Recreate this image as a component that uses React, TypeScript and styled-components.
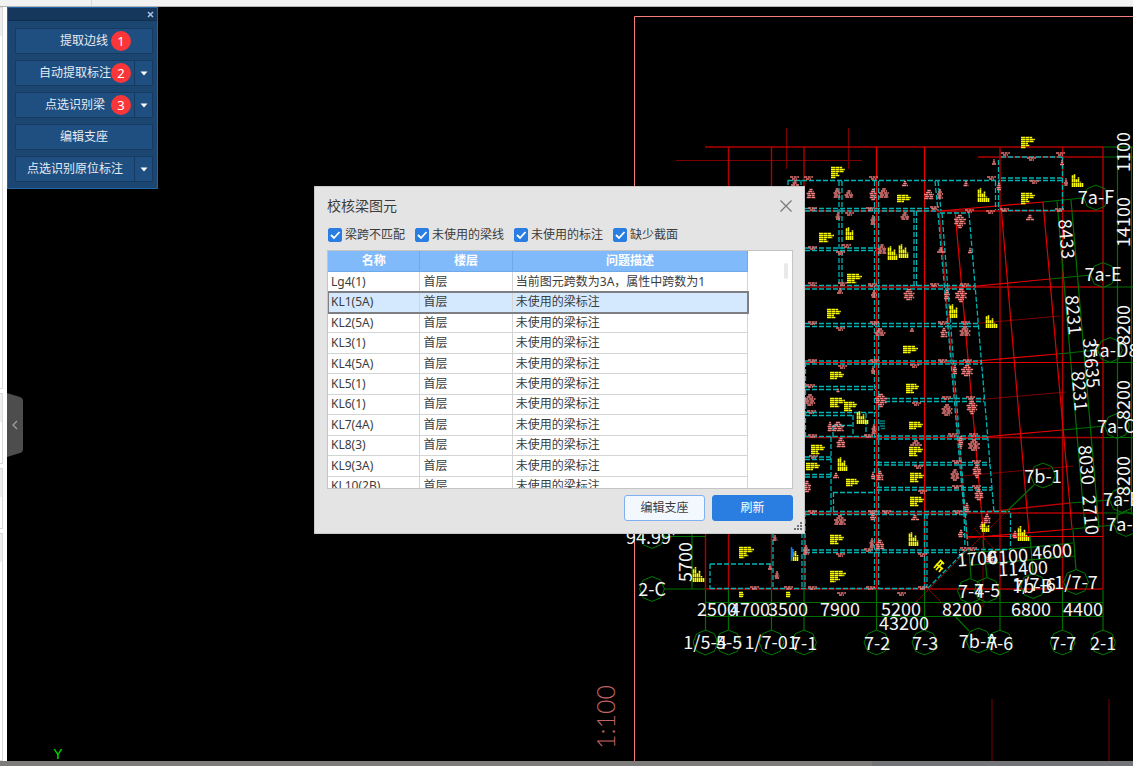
import React from "react";
import styled, { createGlobalStyle, css } from "styled-components";

const GlobalStyle = createGlobalStyle`
  * { box-sizing: border-box; }
  body {
    margin: 0;
    background: #000;
    font-family: "Noto Sans", "Noto Sans CJK SC", sans-serif;
    font-size: 12px;
    line-height: 16px;
    color: #3c3c3c;
  }
  button, input { font: inherit; }
`;

const Shell = styled.div`
  display: grid;
  grid-template: 7px 1fr 5px / 7px 1fr;
  min-height: 100vh;
  overflow: hidden;
`;

const TopEdge = styled.header`
  grid-column: 1 / -1;
  display: flex;
  background: #f2f2f2;
  border-bottom: 1px solid #b4b4b4;
  &::before {
    content: "";
    width: 91px;
    border-right: 1px solid #dcdcdc;
  }
`;

const SideEdge = styled.aside`
  display: flex;
  flex-direction: column;
  gap: 4px;
  background: #fff;
  padding-right: 4px;
`;

const SideBox = styled.div<{ $grow: number }>`
  flex: ${(p) => p.$grow} 0 0;
  border: solid #dadada;
  border-width: 1px 1px 1px 0;
  background: linear-gradient(#efefef 28px, #fff 28px);
`;

const BottomEdge = styled.footer`
  grid-column: 1 / -1;
  display: flex;
  background: #7d7c7b;
  &::after {
    content: "";
    width: 23%;
    margin-left: auto;
    background: #727478;
  }
`;

const Canvas = styled.main`
  position: relative;
  background: #000;
  overflow: hidden;
`;

const Drawing = styled.svg`
  position: absolute;
  inset: 0;
  width: 100%;
  height: 100%;
  text {
    font-family: "Noto Sans CJK SC", sans-serif;
    font-size: 18px;
    fill: #f4f4f4;
    text-anchor: middle;
  }
  .scale {
    font-family: "Lato", "Liberation Sans", sans-serif;
    font-weight: 300;
    font-size: 25px;
    fill: #c46464;
  }
  .axis {
    font-family: "Liberation Sans", sans-serif;
    font-size: 14px;
    fill: #00e000;
  }
`;

/* ---------- Floating command palette ---------- */

const Palette = styled.section`
  position: absolute;
  left: 0;
  top: 0;
  width: 151px;
  border: 1px solid #1f65a8;
  background: #1c4672;
`;

const PaletteBar = styled.div`
  display: flex;
  justify-content: flex-end;
  align-items: center;
  height: 13px;
  padding-right: 3px;
  background: #16375c;
  border-bottom: 1px solid #112e50;
`;

const PaletteClose = styled.button`
  display: flex;
  padding: 0;
  border: 0;
  background: none;
`;

const PaletteBody = styled.div`
  display: flex;
  flex-direction: column;
  gap: 6px;
  padding: 7px 4px 6px 7px;
`;

const CommandRow = styled.div`
  position: relative;
  display: flex;
  height: 26px;
`;

const commandFace = css`
  border: 1px solid #173a61;
  background: #1f4f80;
  color: #e4ecf4;
  padding: 0;
`;

const CommandButton = styled.button`
  ${commandFace}
  flex: 1;
`;

const CommandMore = styled.button`
  ${commandFace}
  display: flex;
  align-items: center;
  justify-content: center;
  width: 18px;
  border-left: 0;
`;

const Badge = styled.span`
  position: absolute;
  left: 96px;
  top: 3px;
  width: 20px;
  height: 20px;
  border-radius: 50%;
  background: #fb3638;
  color: #fff;
  text-align: center;
  line-height: 20px;
  font-size: 13px;
`;

const Handle = styled.button`
  position: absolute;
  left: 0;
  top: 386px;
  width: 16px;
  height: 64px;
  padding: 0;
  border: 0;
  background: none;
`;

/* ---------- Check dialog ---------- */

const Dialog = styled.section`
  position: absolute;
  left: 307px;
  top: 179px;
  width: 491px;
  padding: 0 11px 12px 12px;
  border: 1px solid #c9c9c9;
  background: #e4e4e4;
`;

const DialogHead = styled.div`
  display: flex;
  align-items: center;
  justify-content: space-between;
  height: 38px;
`;

const DialogTitle = styled.h1`
  margin: 0;
  font-size: 14px;
  line-height: 20px;
  font-weight: 400;
`;

const CloseButton = styled.button`
  display: flex;
  padding: 0;
  border: 0;
  background: none;
`;

const Filters = styled.div`
  display: flex;
  gap: 10px;
  height: 25px;
  padding: 2px 0 0 1px;
`;

const Filter = styled.label`
  display: flex;
  align-items: center;
  gap: 3px;
  height: 16px;
  white-space: nowrap;
`;

const TickFrame = styled.span`
  display: grid;
  width: 14px;
  height: 14px;
  > * { grid-area: 1 / 1; }
  svg { pointer-events: none; visibility: hidden; }
  input:checked + svg { visibility: visible; }
`;

const TickInput = styled.input`
  appearance: none;
  width: 14px;
  height: 14px;
  margin: 0;
  border: 1px solid #2a7de1;
  border-radius: 2px;
  background: #fff;
  &:checked { background: #2a7de1; }
`;

const TableFrame = styled.div`
  position: relative;
  height: 239px;
  overflow: hidden;
  border: 1px solid #c4c4c4;
  background: #fff;
`;

const IssueTable = styled.table`
  width: calc(100% - 44px);
  height: 246px;
  table-layout: fixed;
  border-collapse: separate;
  border-spacing: 0;
  th, td {
    height: 20px;
    padding: 0 3px;
    border: solid #d4d4d4;
    border-width: 0 1px 1px 0;
    font-size: 12px;
    line-height: 16px;
    text-align: left;
    white-space: nowrap;
  }
  th {
    height: 21px;
    text-align: center;
    color: #fff;
    background: #81bafa;
    border-color: #6fa9ea;
  }
`;

const Column = styled.col<{ $share: string }>`
  width: ${(p) => p.$share};
`;

const IssueRow = styled.tr<{ $selected: boolean }>`
  ${(p) =>
    p.$selected &&
    css`
      background: #d5e9fe;
      outline: 2px solid #7d7f82;
      outline-offset: -1px;
    `}
`;

const ScrollThumb = styled.div`
  position: absolute;
  right: 4px;
  top: 12px;
  width: 4px;
  height: 16px;
  border-radius: 2px;
  background: #e9e9e9;
`;

const Actions = styled.div`
  display: flex;
  justify-content: flex-end;
  gap: 7px;
  padding-top: 6px;
`;

const Action = styled.button<{ $primary?: boolean }>`
  width: 81px;
  height: 26px;
  padding: 0;
  border: 1px solid ${(p) => (p.$primary ? "#2a7de1" : "#7fb0f2")};
  border-radius: 3px;
  background: ${(p) => (p.$primary ? "#2a7de1" : "#f3f8ff")};
  color: ${(p) => (p.$primary ? "#fff" : "#3c3c3c")};
`;

const Grip = styled.svg`
  position: absolute;
  right: 2px;
  bottom: 2px;
`;

/* ---------- Plan data, in drawing units ---------- */

type Seg = [number, number, number, number];

const brightRed: Seg[] = [
  [876.5, 147, 876.5, 589], [924.5, 147, 924.5, 589],
  [804, 362.5, 1103, 362.5], [967, 536.5, 1103, 536.5],
  [955, 211, 984, 540], [1001, 206, 1029, 533], [1043, 202, 1072, 529],
  [940, 211, 1043, 202], [945, 289, 1050, 279], [955, 363, 1057, 354],
  [962, 439, 1062, 430], [967, 538, 1072, 529],
];

const red: Seg[] = [
  [705, 147, 1103, 147], [728.5, 147, 728.5, 589], [771.5, 147, 771.5, 589],
  [804, 147, 804, 589], [1000, 147, 1000, 589], [1062.5, 147, 1062.5, 589],
  [1103, 147, 1103, 589], [705.5, 480, 705.5, 589], [804, 211, 1103, 211],
  [804, 287, 1103, 287], [804, 437.5, 1103, 437.5], [804, 513, 1103, 513],
  [705, 589, 1103, 589], [939, 210, 967, 540], [985, 512, 1070, 503],
  [978, 157, 1103, 157],
];

const thinRed: Seg[] = [
  [676, 160.5, 862, 160.5], [786.5, 128, 786.5, 169], [848.5, 128, 848.5, 169],
  [970, 324, 1060, 316], [975, 400, 1066, 392], [962, 476, 1073, 466],
  [1005, 513, 908, 610], [974, 528, 997, 552], [983, 520, 983, 607],
  [928, 589, 955, 616], [992, 699, 992, 761], [1109, 699, 1109, 761],
];

const axisX = [705.5, 728.5, 771.5, 804, 876.5, 924.5, 1000, 1062.5, 1103];

const green: Seg[] = [
  [705, 602.5, 1103, 602.5], [705, 616.5, 1103, 616.5],
  ...axisX.map((x): Seg => [x, 590, x, 630]),
  [1117.5, 147, 1117.5, 524], [1131.5, 147, 1131.5, 513],
  [1103, 147, 1133, 147], [1103, 157, 1133, 157], [1103, 287, 1133, 287],
  [1103, 362.5, 1133, 362.5], [1103, 437.5, 1133, 437.5], [1103, 513, 1133, 513],
  [1043, 202, 1083, 198], [1050, 279, 1091, 275], [1057, 354, 1098, 350],
  [1062, 430, 1105, 426], [1070, 503, 1110, 500], [1072, 529, 1114, 525],
  [1057, 201, 1085, 528], [1071, 200, 1099, 528],
  [1034, 485, 1005, 513], [664, 589, 705, 589], [664, 536.5, 705, 536.5],
  [692, 533, 692, 589], [970, 553, 1073, 543], [972, 565, 1075, 556],
  [969, 550, 971, 578], [983, 540, 987, 578], [1030, 535, 1033, 574],
  [1073, 530, 1076, 570], [955, 616, 969, 631],
];

const teal: Seg[] = [
  [788, 180.5, 1000, 180.5], [805, 208.5, 936, 208.5], [805, 211, 936, 211],
  [805, 248, 876, 248], [805, 250.5, 876, 250.5],
  [805, 285.5, 975, 285.5], [805, 289, 975, 289],
  [805, 323.5, 978, 323.5], [805, 326.5, 978, 326.5],
  [805, 361, 981, 361], [805, 364, 981, 364],
  [805, 386.5, 876, 386.5], [805, 389.5, 876, 389.5],
  [885, 398.5, 984, 398.5], [885, 401.5, 984, 401.5],
  [805, 412.5, 876, 412.5], [805, 415.5, 853, 415.5], [833, 425.5, 853, 425.5],
  [805, 436.5, 876, 436.5], [877, 436, 988, 436], [877, 439, 988, 439],
  [805, 457, 831, 457], [805, 459.5, 831, 459.5],
  [877, 462.5, 990, 462.5], [877, 465, 990, 465],
  [805, 474.5, 831, 474.5], [805, 477, 831, 477],
  [877, 487.5, 992, 487.5], [877, 490, 992, 490], [833, 492.5, 875, 492.5],
  [805, 511.5, 1010, 511.5], [805, 514.5, 967, 514.5],
  [805, 550, 967, 550], [805, 552.5, 960, 552.5], [967, 549.5, 1010, 549.5],
  [710, 564, 771, 564], [710, 588.5, 925, 588.5],
  [710, 564, 710, 589], [773, 533, 773, 589], [802, 533, 802, 589], [805, 512, 805, 589],
  [788, 180, 788, 190], [801, 180, 801, 190],
  [839, 181, 839, 285], [842, 181, 842, 285],
  [874.5, 181, 874.5, 589], [878.5, 181, 878.5, 589],
  [831, 437, 831, 512], [833.5, 492, 833.5, 512], [805.5, 362, 805.5, 437],
  [853, 415, 853, 437], [866, 413, 866, 437], [833, 425, 833, 437],
  [914, 211, 914, 286], [916.5, 211, 916.5, 286],
  [935, 181, 938, 211], [938, 181, 941, 211],
  [938, 213, 964, 512], [942, 213, 968, 548], [964, 512, 965, 548],
  [940, 213, 969, 213], [969, 213, 994, 512],
  [1001, 157, 1062, 157], [1062.5, 157, 1062.5, 210], [998.5, 160, 998.5, 210],
  [995.5, 181, 995.5, 210], [1001, 178, 1062, 178], [1001, 180.5, 1062, 180.5],
  [1001, 210.5, 1062, 210.5], [924.5, 514, 924.5, 588], [927, 514, 927, 588],
  [1010.5, 513, 1010.5, 549], [966, 550, 928, 588],
];

const bubbles: [number, number][] = [
  ...axisX.map((x): [number, number] => [x, 642.5]),
  [978.5, 640.5], [652, 536], [652, 589], [1096, 197.5], [1103, 275], [1110, 350],
  [1117, 426], [1122, 500], [1126, 524], [1043, 475.5], [970, 591], [987, 590],
  [1033, 586], [1076, 582],
];

/* text, centre x, centre y, rotation */
const labels: [string, number, number, number][] = [
  ["2500", 717, 609, 0], ["4700", 750, 609, 0], ["3500", 788, 609, 0],
  ["7900", 840, 609, 0], ["5200", 901, 609, 0], ["43200", 904, 623, 0],
  ["8200", 962, 609, 0], ["6800", 1031, 609, 0], ["4400", 1083, 609, 0],
  ["1/5-4", 705, 642, 0], ["5-5", 729, 642, 0], ["1/7-01", 771, 642, 0],
  ["7-1", 804, 643, 0], ["7-2", 877, 643, 0], ["7-3", 925, 643, 0],
  ["7b-A", 978, 641, 0], ["7-6", 1000, 643, 0], ["7-7", 1063, 643, 0],
  ["2-1", 1103, 643, 0], ["94.99'", 651, 537, 0], ["2-C", 652, 589, 0],
  ["5700", 685, 562, -90], ["1100", 1123, 152, -90], ["14100", 1123, 222, -90],
  ["8200", 1123, 325, -90], ["8200", 1123, 400, -90], ["8200", 1123, 476, -90],
  ["7a-F", 1096, 197, 0], ["7a-E", 1103, 274, 0], ["7a-D8", 1114, 350, 0],
  ["7a-C", 1116, 426, 0], ["7a-B", 1122, 499, 0], ["7a-A", 1125, 524, 0],
  ["7b-1", 1043, 476, 0], ["8433", 1067, 239, 85], ["8231", 1074, 315, 85],
  ["35635", 1092, 363, 85], ["8231", 1080, 391, 85], ["8030", 1087, 465, 85],
  ["2710", 1091, 515, 85], ["1700", 977, 558, -4], ["6100", 1008, 556, -4],
  ["4600", 1052, 551, -4], ["11400", 1023, 568, -3], ["7-4", 971, 591, 0],
  ["7-5", 987, 590, 0], ["1/7-6", 1034, 584, 0], ["7b-B", 1033, 586, 0],
  ["1/7-7", 1076, 582, 0],
];

/* yellow beam notes lying flat: x, y, width, height */
const flatNotes: Seg[] = [
  [831, 167, 14, 11], [819, 233, 15, 9], [847, 274, 15, 9], [827, 309, 14, 9],
  [897, 195, 14, 8], [1021, 137, 14, 11], [1021, 193, 14, 11], [903, 346, 15, 8],
  [830, 372, 14, 8], [906, 384, 13, 9], [830, 398, 15, 9], [844, 402, 13, 9],
  [909, 422, 14, 8], [909, 447, 14, 9], [811, 445, 14, 9], [806, 463, 14, 8],
  [846, 479, 13, 8], [910, 473, 14, 9], [910, 497, 14, 9], [739, 547, 15, 12],
  [830, 535, 14, 9], [830, 571, 16, 12], [739, 592, 5, 5], [786, 592, 5, 5],
];

/* yellow beam notes standing upright */
const uprightNotes: Seg[] = [
  [846, 227, 8, 13], [888, 246, 9, 14], [899, 244, 9, 14], [978, 188, 11, 14],
  [1072, 174, 11, 13], [950, 304, 8, 14], [857, 411, 12, 13], [838, 457, 10, 14],
  [909, 532, 9, 14], [693, 567, 11, 15], [793, 551, 6, 10], [982, 523, 8, 9],
  [1018, 526, 12, 15], [986, 315, 11, 13],
];

/* reinforcement call-outs: centre x, centre y, width, height */
const callouts: Seg[] = [
  [795, 184, 8, 8], [811, 193, 9, 9], [837, 193, 7, 10], [849, 194, 9, 8],
  [873, 194, 7, 11], [884, 193, 10, 10], [905, 216, 9, 8], [905, 183, 6, 5],
  [929, 194, 10, 9], [966, 183, 5, 5], [960, 221, 12, 13], [940, 194, 6, 10],
  [838, 216, 5, 8], [873, 220, 5, 10], [882, 249, 9, 10], [941, 250, 8, 6],
  [970, 250, 4, 5], [840, 291, 6, 6], [874, 294, 6, 8], [909, 294, 11, 11],
  [961, 295, 12, 13], [947, 294, 6, 9], [880, 332, 11, 8], [944, 332, 7, 9],
  [965, 331, 11, 10], [912, 330, 7, 4], [967, 370, 12, 11], [955, 369, 4, 9],
  [873, 370, 4, 8], [881, 400, 12, 13], [810, 400, 11, 12], [947, 410, 11, 12],
  [972, 407, 11, 13], [838, 426, 12, 9], [874, 429, 5, 10], [830, 426, 5, 9],
  [841, 442, 9, 9], [916, 443, 12, 6], [974, 445, 12, 12], [961, 442, 5, 13],
  [836, 475, 6, 5], [880, 475, 7, 9], [873, 475, 4, 7], [955, 475, 9, 12],
  [977, 471, 9, 13], [807, 486, 8, 11], [979, 494, 9, 11], [967, 507, 5, 9],
  [987, 518, 7, 9], [915, 517, 8, 5], [840, 520, 12, 10], [872, 543, 5, 10],
  [880, 544, 9, 9], [806, 550, 6, 10], [777, 575, 5, 8], [775, 538, 5, 6],
  [961, 533, 6, 7], [1015, 534, 5, 7], [990, 557, 8, 9], [994, 162, 4, 6],
  [1066, 182, 4, 8], [1030, 217, 8, 5], [999, 186, 5, 7], [1062, 162, 4, 5],
  [982, 525, 5, 7], [873, 516, 6, 7], [838, 390, 5, 3], [770, 567, 4, 6],
];

/* small bar marks along the beams: x, y */
const marks: [number, number][] = [
  [790, 177], [804, 177], [869, 177], [808, 208], [866, 208], [845, 213], [930, 207],
  [986, 211], [965, 210], [987, 177], [1001, 153], [1056, 153], [1027, 158], [1030, 181],
  [808, 247], [842, 245], [836, 252], [808, 283], [868, 284], [838, 283], [930, 284],
  [960, 284], [808, 322], [870, 322], [836, 328], [938, 322], [961, 322], [808, 360],
  [870, 360], [838, 366], [910, 365], [938, 360], [963, 360], [806, 385], [807, 411],
  [808, 435], [864, 435], [942, 397], [966, 397], [912, 403], [948, 434], [969, 434],
  [914, 466], [952, 461], [972, 461], [952, 486], [972, 486], [918, 491], [882, 511],
  [953, 511], [808, 511], [868, 511], [864, 549], [836, 554], [918, 554], [960, 548],
  [808, 587], [866, 587], [897, 593], [837, 593], [784, 587], [918, 587], [1000, 209],
  [1055, 209], [968, 548], [809, 456], [750, 587],
];

const segPath = (list: Seg[]) =>
  list.map(([a, b, c, d]) => `M${a} ${b}L${c} ${d}`).join("");

const flatRuns = [0.8, 1, 0.9, 0.5, 0.62, 0.35];
const flatPath = flatNotes
  .map(([x, y, w, h]) => {
    let d = "";
    for (let i = 0; i * 2 < h; i++) {
      d += `M${x} ${y + 0.5 + i * 2}h${w * flatRuns[i % 6]}`;
    }
    return d;
  })
  .join("");

const uprightRuns = [0.9, 1, 0.6, 0.75, 0.4, 0.3];
const uprightPath = uprightNotes
  .map(([x, y, w, h]) => {
    let d = "";
    for (let i = 0; i * 2 < w; i++) {
      d += `M${x + 0.5 + i * 2} ${y + h}v${-h * uprightRuns[i % 6]}`;
    }
    return d;
  })
  .join("");

const calloutRuns = [0.35, 0.6, 1, 0.8, 0.95, 0.5, 0.3];
const calloutPath = callouts
  .map(([x, y, w, h]) => {
    let d = "";
    for (let i = 0; i * 2 < h; i++) {
      const run = w * calloutRuns[i % 7];
      d += `M${x - run / 2} ${y - h / 2 + 1 + i * 2}h${run}`;
    }
    return d;
  })
  .join("");

const markPath = marks.map(([x, y]) => `M${x} ${y}h9M${x + 2} ${y + 2}h5`).join("");

const octagon = (cx: number, cy: number) =>
  Array.from({ length: 8 }, (_, i) => {
    const a = (i * Math.PI) / 4;
    return `${(cx + 12.4 * Math.sin(a)).toFixed(1)},${(cy - 12.4 * Math.cos(a)).toFixed(1)}`;
  }).join(" ");

function Plan() {
  return (
    <Drawing viewBox="7 7 1126 754" preserveAspectRatio="xMinYMin meet" fill="none">
      <path d="M634.5 761V16.5H1133" stroke="#f87c7c" />
      <path d={segPath(thinRed)} stroke="#7a0000" />
      <path d={segPath(red)} stroke="#b00000" strokeWidth="1.4" />
      <path d={segPath(green)} stroke="#007000" strokeWidth="1.2" />
      <path d={segPath(brightRed)} stroke="#e60000" strokeWidth="1.2" />
      <path d={segPath(teal)} stroke="#00b4b4" strokeWidth="1.3" strokeDasharray="5 2" />
      <path d={markPath} stroke="#e87474" strokeWidth="1.5" strokeDasharray="3 0.6" />
      <path d={calloutPath} stroke="#f48080" strokeWidth="1.5" strokeDasharray="4 0.6" />
      <path d={flatPath} stroke="#fafa00" strokeWidth="1.6" strokeDasharray="4 0.4" />
      <path d={uprightPath} stroke="#fafa00" strokeWidth="1.6" strokeDasharray="4 0.4" />
      <path
        d="M934 568l7-8M936 570l6-7M939 572l3-4M936 564l7 5M940 560l4 4"
        stroke="#f4f400"
        strokeWidth="1.8"
      />
      <path d="M791.5 547v14M793 549v8" stroke="#1678e8" strokeWidth="1.5" />
      <path d="M880 421h5M879 423.5h6M880 426h5M881 428.5h4" stroke="#007c7c" strokeWidth="1.7" />
      {bubbles.map(([x, y]) => (
        <polygon key={`${x}-${y}`} points={octagon(x, y)} stroke="#007c00" />
      ))}
      {labels.map(([text, x, y, turn], i) => (
        <text key={i} transform={`translate(${x} ${y}) rotate(${turn})`} y="7">
          {text}
        </text>
      ))}
      <text className="scale" transform="translate(615 717) rotate(-90)">
        1:100
      </text>
      <text className="axis" x="58" y="759">
        Y
      </text>
    </Drawing>
  );
}

/* ---------- UI data ---------- */

const commands = [
  { label: "提取边线", more: false, step: 1 },
  { label: "自动提取标注", more: true, step: 2 },
  { label: "点选识别梁", more: true, step: 3 },
  { label: "编辑支座", more: false },
  { label: "点选识别原位标注", more: true },
];

const filters = ["梁跨不匹配", "未使用的梁线", "未使用的标注", "缺少截面"];

const unused = "未使用的梁标注";
const issues = [
  ["Lg4(1)", "当前图元跨数为3A，属性中跨数为1"],
  ["KL1(5A)", unused],
  ["KL2(5A)", unused],
  ["KL3(1)", unused],
  ["KL4(5A)", unused],
  ["KL5(1)", unused],
  ["KL6(1)", unused],
  ["KL7(4A)", unused],
  ["KL8(3)", unused],
  ["KL9(3A)", unused],
  ["KL10(2B)", unused],
];

export default function App() {
  return (
    <>
      <GlobalStyle />
      <Shell>
        <TopEdge />
        <SideEdge>
          <SideBox $grow={384} />
          <SideBox $grow={70} />
          <SideBox $grow={60} />
          <SideBox $grow={228} />
        </SideEdge>
        <Canvas>
          <Plan />

          <Palette aria-label="识别梁">
            <PaletteBar>
              <PaletteClose aria-label="关闭">
                <svg width="7" height="7" viewBox="0 0 7 7" stroke="#a9c4e4" strokeWidth="1.5">
                  <path d="M1 1l5 5M6 1L1 6" />
                </svg>
              </PaletteClose>
            </PaletteBar>
            <PaletteBody>
              {commands.map((c) => (
                <CommandRow key={c.label}>
                  <CommandButton>{c.label}</CommandButton>
                  {c.more && (
                    <CommandMore aria-label={`${c.label}选项`}>
                      <svg width="8" height="5" viewBox="0 0 8 5" fill="#fff">
                        <path d="M0.5 0.5h7L4 4.5z" />
                      </svg>
                    </CommandMore>
                  )}
                  {c.step && <Badge>{c.step}</Badge>}
                </CommandRow>
              ))}
            </PaletteBody>
          </Palette>

          <Handle aria-label="收起面板">
            <svg width="16" height="64" viewBox="0 0 16 64" fill="none">
              <path d="M0 0L13 4Q16 5 16 8V56Q16 59 13 60L0 64Z" fill="#4d4d4d" />
              <path d="M10 28L6 32L10 36" stroke="#a0a0a0" strokeWidth="1.2" />
            </svg>
          </Handle>

          <Dialog role="dialog" aria-labelledby="check-title">
            <DialogHead>
              <DialogTitle id="check-title">校核梁图元</DialogTitle>
              <CloseButton aria-label="关闭">
                <svg width="14" height="12" viewBox="0 0 14 12" stroke="#777" strokeWidth="1.2">
                  <path d="M1.5 0.5l11 11M12.5 0.5l-11 11" />
                </svg>
              </CloseButton>
            </DialogHead>
            <Filters>
              {filters.map((label) => (
                <Filter key={label}>
                  <TickFrame>
                    <TickInput type="checkbox" defaultChecked />
                    <svg width="14" height="14" viewBox="0 0 14 14" fill="none">
                      <path d="M3 7l3 3 5.5-6" stroke="#fff" strokeWidth="1.8" />
                    </svg>
                  </TickFrame>
                  {label}
                </Filter>
              ))}
            </Filters>
            <TableFrame>
              <IssueTable>
                <colgroup>
                  <Column $share="22%" />
                  <Column $share="22%" />
                  <Column $share="56%" />
                </colgroup>
                <thead>
                  <tr>
                    <th>名称</th>
                    <th>楼层</th>
                    <th>问题描述</th>
                  </tr>
                </thead>
                <tbody>
                  {issues.map(([name, text], i) => (
                    <IssueRow key={name} $selected={i === 1}>
                      <td>{name}</td>
                      <td>首层</td>
                      <td>{text}</td>
                    </IssueRow>
                  ))}
                </tbody>
              </IssueTable>
              <ScrollThumb />
            </TableFrame>
            <Actions>
              <Action>编辑支座</Action>
              <Action $primary>刷新</Action>
            </Actions>
            <Grip width="9" height="9" viewBox="0 0 9 9" fill="#6b7076">
              <path d="M7 0h2v2H7zM7 3h2v2H7zM7 6h2v2H7zM4 3h2v2H4zM4 6h2v2H4zM1 6h2v2H1z" />
            </Grip>
          </Dialog>
        </Canvas>
        <BottomEdge />
      </Shell>
    </>
  );
}
